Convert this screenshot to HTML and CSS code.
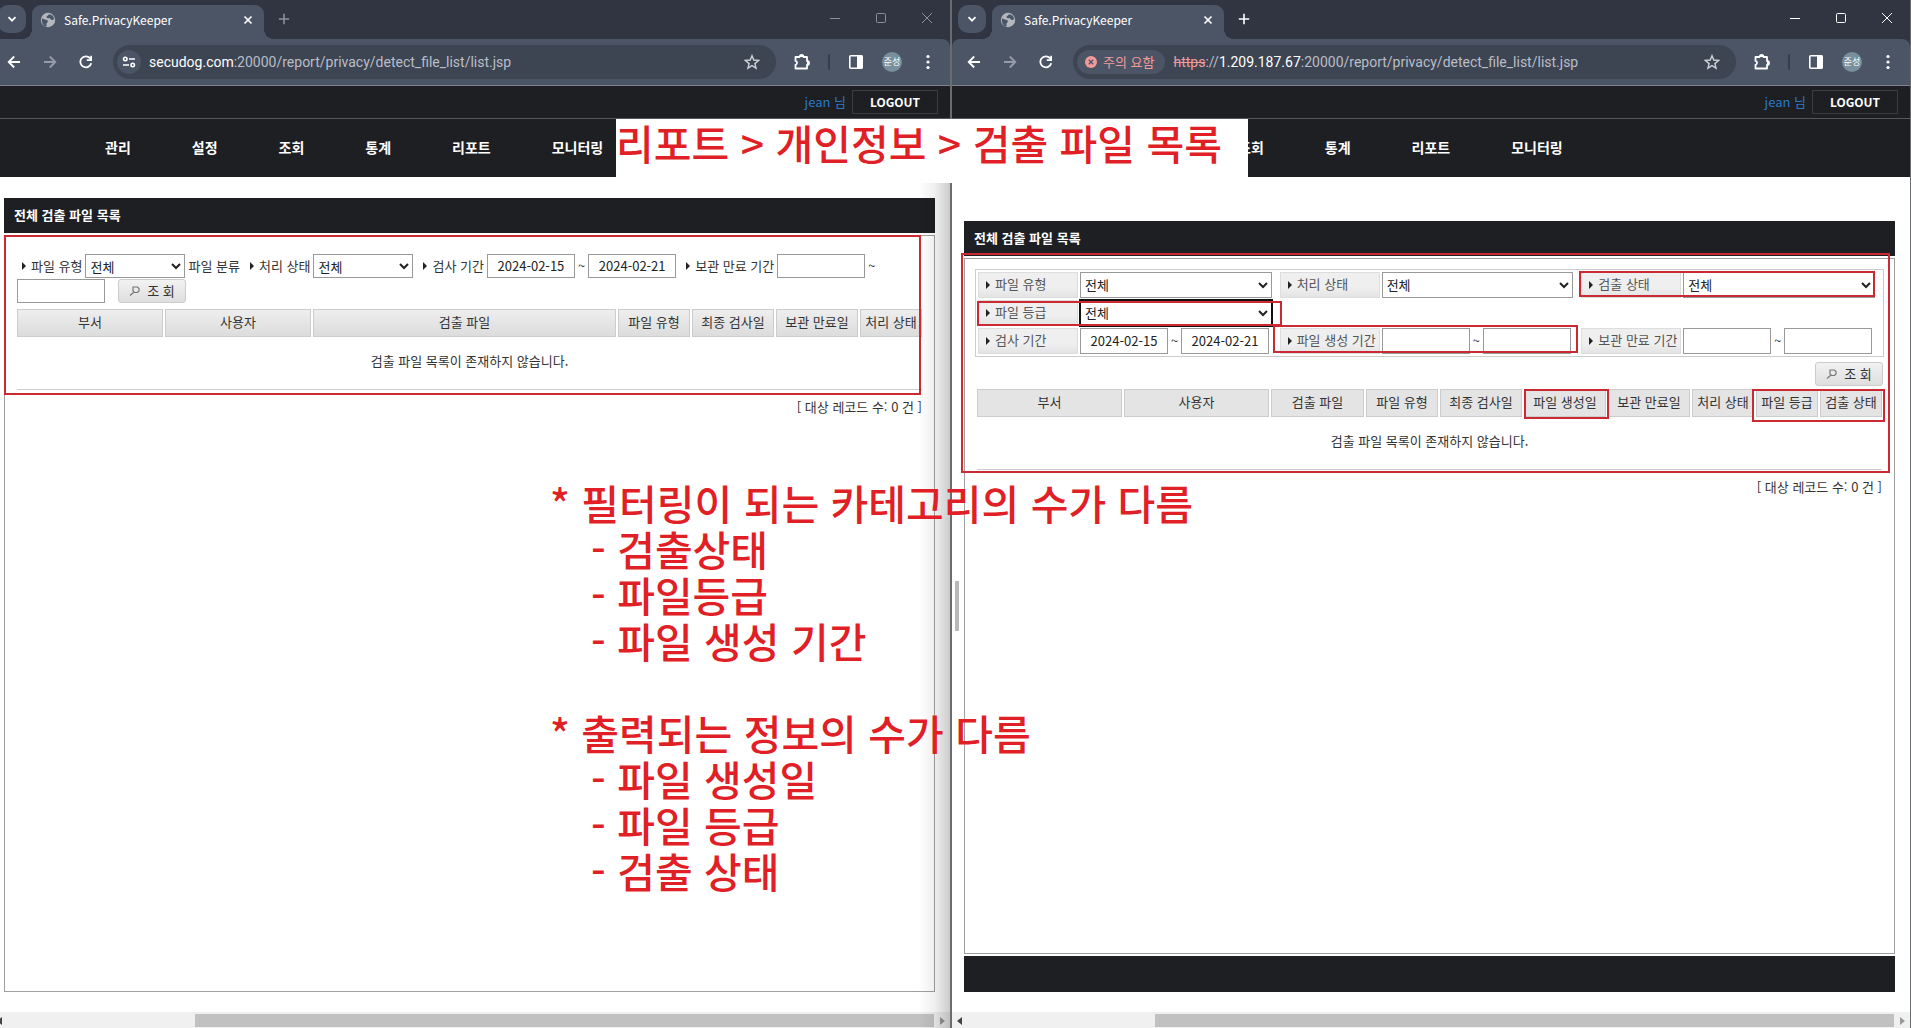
FILE: index.html
```html
<!DOCTYPE html>
<html lang="ko">
<head>
<meta charset="utf-8">
<title>Safe.PrivacyKeeper</title>
<link rel="stylesheet" href="styles.css">
</head>
<body>
<svg class="sprite" aria-hidden="true">
  <symbol id="i-chevron" viewBox="0 0 10 10"><path d="M1.5 3.2 5 6.7l3.500-3.500" fill="none" stroke="currentColor" stroke-width="1.800"/></symbol>
  <symbol id="i-globe" viewBox="0 0 16 16"><circle cx="8" cy="8" r="7.200" fill="#b4b8be"/><path d="M2 6.500c1.800.2 2.500 1.200 4 1.300 1.500.2 2 .8 1.800 2-.2 1-1.300 1-1.300 2.200v2.500C3.500 14 1.300 11 2 6.500zM9 2.200c-.5 1.500-2.500 1.300-2.500 3 .2 1.300 2 .8 3.200 1 1.200.3 1 1.800 2.300 1.900.9 0 1.300-.6 2-.8C14 4.500 12 2.300 9 2.200z" fill="#4b5565"/></symbol>
  <symbol id="i-close" viewBox="0 0 10 10"><path d="M1.500 1.500l7 7M8.500 1.500l-7 7" stroke="currentColor" stroke-width="1.700"/></symbol>
  <symbol id="i-plus" viewBox="0 0 12 12"><path d="M6 .8v10.400M.8 6h10.400" stroke="currentColor" stroke-width="1.600"/></symbol>
  <symbol id="i-min" viewBox="0 0 12 12"><path d="M1 6.500h10" stroke="currentColor"/></symbol>
  <symbol id="i-max" viewBox="0 0 12 12"><rect x="1.500" y="1.500" width="9" height="9" rx="1" fill="none" stroke="currentColor"/></symbol>
  <symbol id="i-x" viewBox="0 0 12 12"><path d="M1 1l10 10M11 1L1 11" stroke="currentColor"/></symbol>
  <symbol id="i-back" viewBox="0 0 14 14"><path d="M13 7H2M7.200 1.500L1.700 7l5.500 5.500" fill="none" stroke="currentColor" stroke-width="1.800"/></symbol>
  <symbol id="i-fwd" viewBox="0 0 14 14"><path d="M1 7h11M6.800 1.500L12.300 7l-5.500 5.500" fill="none" stroke="currentColor" stroke-width="1.800"/></symbol>
  <symbol id="i-reload" viewBox="0 0 14 14"><path d="M12.200 8.200A5.500 5.500 0 1 1 11 3.200l1.500 1.700" fill="none" stroke="currentColor" stroke-width="1.800"/><path d="M13 .8v5.200H7.800V4.300h3.500V.8z" fill="currentColor"/></symbol>
  <symbol id="i-tune" viewBox="0 0 14 14"><g fill="none" stroke="currentColor" stroke-width="1.600"><circle cx="3.300" cy="4" r="1.700"/><path d="M7 4h6M1 10h6"/><circle cx="10.700" cy="10" r="1.700"/></g></symbol>
  <symbol id="i-star" viewBox="0 0 16 16"><path d="M8 1.800l1.800 4.300 4.700.4-3.600 3.100 1.100 4.600L8 11.700l-4 2.500 1.100-4.600L1.500 6.500l4.700-.4z" fill="none" stroke="currentColor" stroke-width="1.500"/></symbol>
  <symbol id="i-puzzle" viewBox="0 0 18 18"><path d="M2.500 4H6.500a2 2 0 0 1 4 0H14v4a2 2 0 0 1 0 4v3.500H2.500v-3.700a2 2 0 0 0 0-3.900z" fill="none" stroke="currentColor" stroke-width="1.800" stroke-linejoin="round"/><path d="M6.700 4a1.800 1.800 0 0 1 3.600 0zM14 8.200a1.800 1.800 0 0 1 0 3.600z" fill="currentColor"/></symbol>
  <symbol id="i-panel" viewBox="0 0 16 16"><rect x="1.800" y="1.800" width="12.400" height="12.400" rx="1" fill="none" stroke="currentColor" stroke-width="1.600"/><path d="M9 1.500h5.500v13H9z" fill="currentColor"/></symbol>
  <symbol id="i-dots" viewBox="0 0 4 16"><g fill="currentColor"><circle cx="2" cy="2.500" r="1.600"/><circle cx="2" cy="8" r="1.600"/><circle cx="2" cy="13.500" r="1.600"/></g></symbol>
  <symbol id="i-warn" viewBox="0 0 12 12"><circle cx="6" cy="6" r="6" fill="#f29a9a"/><path d="M3.800 3.800l4.400 4.400M8.200 3.800L3.800 8.200" stroke="#4b5565" stroke-width="1.300"/></symbol>
  <symbol id="i-search" viewBox="0 0 12 12"><path d="M4.500 7.500l-3.500 3M4 2h4.500l1.500 1.500V6L8.500 7.500h-3L4 6z" fill="none" stroke="#777" stroke-width="1.200"/></symbol>
  <symbol id="i-left" viewBox="0 0 5 8"><path d="M5 0v8L0 4z" fill="currentColor"/></symbol>
  <symbol id="i-right" viewBox="0 0 5 8"><path d="M0 0v8l5-4z" fill="currentColor"/></symbol>
</svg>

<div class="desktop">
  <section class="pane pane-old">
    <div class="window inactive">
      <header class="tabstrip">
        <button class="tab-search" aria-label="탭 검색"><svg class="s10"><use href="#i-chevron"/></svg></button>
        <div class="tab">
          <svg class="s16"><use href="#i-globe"/></svg>
          <span class="tab-title">Safe.PrivacyKeeper</span>
          <button class="tab-close" aria-label="탭 닫기"><svg class="s10"><use href="#i-close"/></svg></button>
        </div>
        <button class="new-tab" aria-label="새 탭"><svg class="s12"><use href="#i-plus"/></svg></button>
        <div class="controls">
          <button aria-label="최소화"><svg class="s12"><use href="#i-min"/></svg></button>
          <button aria-label="최대화"><svg class="s12"><use href="#i-max"/></svg></button>
          <button aria-label="닫기"><svg class="s12"><use href="#i-x"/></svg></button>
        </div>
      </header>
      <div class="toolbar">
        <button class="tool" aria-label="뒤로"><svg class="s14"><use href="#i-back"/></svg></button>
        <button class="tool dim" aria-label="앞으로"><svg class="s14"><use href="#i-fwd"/></svg></button>
        <button class="tool" aria-label="새로고침"><svg class="s14"><use href="#i-reload"/></svg></button>
        <div class="omnibox">
          <button class="site-info" aria-label="사이트 정보"><svg class="s14"><use href="#i-tune"/></svg></button>
          <span class="url"><b>secudog.com</b>:20000/report/privacy/detect_file_list/list.jsp</span>
          <button class="star" aria-label="북마크"><svg class="s16"><use href="#i-star"/></svg></button>
        </div>
        <button class="tool" aria-label="확장 프로그램"><svg class="s18"><use href="#i-puzzle"/></svg></button>
        <span class="divider"></span>
        <button class="tool" aria-label="측면 패널"><svg class="s16"><use href="#i-panel"/></svg></button>
        <button class="tool" aria-label="프로필"><span class="avatar">준성</span></button>
        <button class="tool" aria-label="메뉴"><svg class="dots"><use href="#i-dots"/></svg></button>
      </div>
      <div class="userbar"><span class="user">jean 님</span><button class="logout">LOGOUT</button></div>
      <nav class="menu"><a href="#">관리</a><a href="#">설정</a><a href="#">조회</a><a href="#">통계</a><a href="#">리포트</a><a href="#">모니터링</a></nav>
      <main class="page">
        <h1 class="title">전체 검출 파일 목록</h1>
        <div class="panel">
          <form class="inline-filter">
            <label class="mark-label" for="a-type">파일 유형</label>
            <select id="a-type"><option>전체</option></select>
            <span>파일 분류</span>
            <label class="mark-label" for="a-state">처리 상태</label>
            <select id="a-state"><option>전체</option></select>
            <label class="mark-label" for="a-from">검사 기간</label>
            <input type="text" id="a-from" value="2024-02-15"><span>~</span><input type="text" aria-label="검사 기간 끝" value="2024-02-21">
            <label class="mark-label" for="a-exp">보관 만료 기간</label>
            <input type="text" id="a-exp"><span>~</span><input type="text" aria-label="보관 만료 기간 끝">
            <button type="button" class="search"><svg class="s12"><use href="#i-search"/></svg>조 회</button>
          </form>
          <table class="list glossy">
            <colgroup><col class="w146"><col class="w146"><col><col class="w72"><col class="w82"><col class="w82"><col class="w62"></colgroup>
            <thead><tr><th>부서</th><th>사용자</th><th>검출 파일</th><th>파일 유형</th><th>최종 검사일</th><th>보관 만료일</th><th>처리 상태</th></tr></thead>
            <tbody><tr><td colspan="7">검출 파일 목록이 존재하지 않습니다.</td></tr></tbody>
          </table>
          <p class="count">[ 대상 레코드 수: 0 건 ]</p>
        </div>
      </main>
      <div class="scrollbar"><svg class="arrow"><use href="#i-left"/></svg><span class="thumb"></span><svg class="arrow faint"><use href="#i-right"/></svg></div>
    </div>
    <div class="shade"></div>
    <div class="box box-old"></div>
  </section>

  <section class="pane pane-new">
    <div class="window">
      <header class="tabstrip">
        <button class="tab-search" aria-label="탭 검색"><svg class="s10"><use href="#i-chevron"/></svg></button>
        <div class="tab">
          <svg class="s16"><use href="#i-globe"/></svg>
          <span class="tab-title">Safe.PrivacyKeeper</span>
          <button class="tab-close" aria-label="탭 닫기"><svg class="s10"><use href="#i-close"/></svg></button>
        </div>
        <button class="new-tab" aria-label="새 탭"><svg class="s12"><use href="#i-plus"/></svg></button>
        <div class="controls">
          <button aria-label="최소화"><svg class="s12"><use href="#i-min"/></svg></button>
          <button aria-label="최대화"><svg class="s12"><use href="#i-max"/></svg></button>
          <button aria-label="닫기"><svg class="s12"><use href="#i-x"/></svg></button>
        </div>
      </header>
      <div class="toolbar">
        <button class="tool" aria-label="뒤로"><svg class="s14"><use href="#i-back"/></svg></button>
        <button class="tool dim" aria-label="앞으로"><svg class="s14"><use href="#i-fwd"/></svg></button>
        <button class="tool" aria-label="새로고침"><svg class="s14"><use href="#i-reload"/></svg></button>
        <div class="omnibox">
          <button class="site-info warning"><svg class="s12"><use href="#i-warn"/></svg>주의 요함</button>
          <span class="url"><s>https</s>://<b>1.209.187.67</b>:20000/report/privacy/detect_file_list/list.jsp</span>
          <button class="star" aria-label="북마크"><svg class="s16"><use href="#i-star"/></svg></button>
        </div>
        <button class="tool" aria-label="확장 프로그램"><svg class="s18"><use href="#i-puzzle"/></svg></button>
        <span class="divider"></span>
        <button class="tool" aria-label="측면 패널"><svg class="s16"><use href="#i-panel"/></svg></button>
        <button class="tool" aria-label="프로필"><span class="avatar">준성</span></button>
        <button class="tool" aria-label="메뉴"><svg class="dots"><use href="#i-dots"/></svg></button>
      </div>
      <div class="userbar"><span class="user">jean 님</span><button class="logout">LOGOUT</button></div>
      <nav class="menu menu-short"><a href="#">조회</a><a href="#">통계</a><a href="#">리포트</a><a href="#">모니터링</a></nav>
      <main class="page page-new">
        <h1 class="title">전체 검출 파일 목록</h1>
        <div class="panel">
          <form>
            <div class="grid-filter">
              <label class="mark-label" for="b-type">파일 유형</label>
              <div class="field"><select id="b-type"><option>전체</option></select></div>
              <label class="mark-label" for="b-state">처리 상태</label>
              <div class="field"><select id="b-state"><option>전체</option></select></div>
              <label class="mark-label" for="b-detect">검출 상태</label>
              <div class="field"><select id="b-detect"><option>전체</option></select></div>
              <label class="mark-label" for="b-grade">파일 등급</label>
              <div class="field wide"><select id="b-grade" class="focused"><option>전체</option></select></div>
              <label class="mark-label" for="b-from">검사 기간</label>
              <div class="field"><input type="text" id="b-from" value="2024-02-15"><span>~</span><input type="text" aria-label="검사 기간 끝" value="2024-02-21"></div>
              <label class="mark-label" for="b-made">파일 생성 기간</label>
              <div class="field"><input type="text" id="b-made"><span>~</span><input type="text" aria-label="파일 생성 기간 끝"></div>
              <label class="mark-label" for="b-exp">보관 만료 기간</label>
              <div class="field"><input type="text" id="b-exp"><span>~</span><input type="text" aria-label="보관 만료 기간 끝"></div>
            </div>
            <div class="actions"><button type="button" class="search"><svg class="s12"><use href="#i-search"/></svg>조 회</button></div>
          </form>
          <table class="list">
            <colgroup><col class="w145"><col class="w145"><col><col class="w72"><col class="w82"><col class="w82"><col class="w82"><col class="w62"><col class="w62"><col class="w62"></colgroup>
            <thead><tr><th>부서</th><th>사용자</th><th>검출 파일</th><th>파일 유형</th><th>최종 검사일</th><th>파일 생성일</th><th>보관 만료일</th><th>처리 상태</th><th>파일 등급</th><th>검출 상태</th></tr></thead>
            <tbody><tr><td colspan="10">검출 파일 목록이 존재하지 않습니다.</td></tr></tbody>
          </table>
          <p class="count">[ 대상 레코드 수: 0 건 ]</p>
        </div>
        <footer class="footer"></footer>
      </main>
      <div class="scrollbar"><svg class="arrow"><use href="#i-left"/></svg><span class="thumb"></span><svg class="arrow faint"><use href="#i-right"/></svg></div>
    </div>
    <span class="grip"></span>
    <div class="box box-new"></div>
    <div class="box box-detect"></div>
    <div class="box box-grade"></div>
    <div class="box box-made"></div>
    <div class="box box-made-col"></div>
    <div class="box box-last-cols"></div>
  </section>

  <p class="note path">리포트 &gt; 개인정보 &gt; 검출 파일 목록</p>
  <div class="note findings">
    <p>* 필터링이 되는 카테고리의 수가 다름</p>
    <ul><li>- 검출상태</li><li>- 파일등급</li><li>- 파일 생성 기간</li></ul>
    <p>* 출력되는 정보의 수가 다름</p>
    <ul><li>- 파일 생성일</li><li>- 파일 등급</li><li>- 검출 상태</li></ul>
  </div>
</div>
</body>
</html>
```
FILE: styles.css
```css
* { box-sizing: border-box; }

body {
  margin: 0;
  font: 13px/20px "Noto Sans CJK KR", "Noto Sans", sans-serif;
  color: #333;
  background: #fff;
}

button, input, select { font: inherit; color: inherit; }
button { padding: 0; border: 0; background: none; }
p, h1, ul { margin: 0; padding: 0; list-style: none; }
svg { display: block; flex: none; }

.sprite { position: absolute; width: 0; height: 0; }
.s10 { width: 10px; height: 10px; }
.s12 { width: 12px; height: 12px; }
.s14 { width: 14px; height: 14px; }
.s16 { width: 16px; height: 16px; }
.s18 { width: 18px; height: 18px; }
.dots { width: 4px; height: 16px; }

.desktop {
  position: relative;
  display: grid;
  grid-template-columns: 950fr 961fr;
  min-height: 100vh;
  overflow: hidden;
}

.pane { position: relative; display: flex; min-width: 0; overflow: hidden; }
.pane-old .window { margin-left: -8px; }
.pane-new { border-left: 2px solid #6a6c70; border-right: 1px solid #6a6c70; }

.window { flex: 1; min-width: 0; display: flex; flex-direction: column; }

/* browser frame */
.tabstrip {
  display: flex;
  height: 47px;
  margin-bottom: -8px;
  padding: 5px 0 8px 6px;
  background: #303541;
  color: #fff;
}

.tab-search {
  display: grid;
  place-items: center;
  width: 28px;
  height: 28px;
  border-radius: 10px;
  background: #4b5565;
}

.tab {
  position: relative;
  display: flex;
  align-items: center;
  width: 232px;
  margin-left: 6px;
  padding: 0 11px 5px 8px;
  border-radius: 9px 9px 0 0;
  background: #4b5565;
}

.tab::before, .tab::after {
  content: "";
  position: absolute;
  bottom: 0;
  width: 10px;
  height: 10px;
}
.tab::before { right: 100%; background: radial-gradient(circle at 0 0, transparent 10px, #4b5565 10px); }
.tab::after { left: 100%; background: radial-gradient(circle at 100% 0, transparent 10px, #4b5565 10px); }

.tab-title { flex: 1; padding-left: 8px; font-size: 12px; }
.new-tab { margin-left: 14px; height: 28px; }
.controls { display: flex; margin-left: auto; padding-right: 17px; gap: 34px; height: 26px; }
.inactive .new-tab, .inactive .controls { color: #8b909a; }

.toolbar {
  position: relative;
  display: flex;
  align-items: center;
  height: 47px;
  padding: 0 4px;
  border-bottom: 1px solid #7c818b;
  border-radius: 8px 8px 0 0;
  background: #4b5565;
  color: #fff;
}

.tool { display: grid; place-items: center; width: 36px; height: 36px; }
.dim { color: #979da8; }
.divider { width: 2px; height: 16px; margin: 0 8px; border-radius: 1px; background: #363c49; }

.omnibox {
  flex: 1;
  display: flex;
  align-items: center;
  min-width: 0;
  height: 34px;
  margin: 0 8px 0 9px;
  padding: 0 16px 0 4px;
  border-radius: 17px;
  background: #3d4452;
}

.site-info {
  display: grid;
  place-items: center;
  width: 24px;
  height: 24px;
  border-radius: 12px;
  background: #4b5565;
}
.warning {
  display: flex;
  align-items: center;
  gap: 6px;
  width: auto;
  padding: 0 11px 0 8px;
  color: #f29a9a;
}

.url {
  flex: 1;
  padding-left: 8px;
  font-family: Roboto, "Noto Sans", sans-serif;
  font-size: 14px;
  white-space: nowrap;
  color: #b9bec7;
}
.url b { font-weight: 400; color: #fff; }
.url s { color: #f29a9a; }
.star { color: #c8ccd3; }

.avatar {
  width: 20px;
  height: 20px;
  border-radius: 50%;
  background: #78909c;
  font-size: 9px;
  line-height: 20px;
  text-align: center;
}

/* site header */
.userbar {
  display: flex;
  justify-content: flex-end;
  align-items: center;
  gap: 6px;
  height: 33px;
  padding-right: 12px;
  border-bottom: 1px solid #55565a;
  background: #1e1f23;
}
.user { color: #2b78c8; }
.logout {
  width: 86px;
  height: 24px;
  border: 1px solid #3b3c40;
  font-size: 12px;
  font-weight: 700;
  color: #fff;
}

.menu {
  display: flex;
  align-items: center;
  gap: 61px;
  height: 58px;
  padding: 0 0 2px 113px;
  background: #1e1f23;
}
.menu-short { padding-left: 286px; }
.menu a { font-size: 14px; font-weight: 700; color: #fff; text-decoration: none; white-space: nowrap; }

/* page body */
.page {
  flex: 1;
  display: flex;
  flex-direction: column;
  gap: 2px;
  padding: 21px 15px 20px 12px;
}
.page-new { padding-top: 44px; }

.title {
  padding: 7px 10px 8px;
  background: #1e1f23;
  font-size: 13px;
  font-weight: 700;
  color: #fff;
}

.panel { flex: 1; padding: 10px; border: 1px solid #a0a0a0; }
.footer { height: 36px; background: #1e1f23; }

.mark-label { position: relative; padding-left: 14px; white-space: nowrap; }
.mark-label::before {
  content: "";
  position: absolute;
  left: 5px;
  top: 6px;
  border: 4px solid transparent;
  border-left: 4px solid #222;
  border-right: 0;
}

select, input {
  height: 24px;
  margin: 0;
  border: 1px solid #999;
  border-radius: 0;
  background: #fff;
  color: #222;
}
select { width: 100px; padding: 0; }
input { width: 88px; padding: 0 0 1px; text-align: center; }

.inline-filter {
  display: flex;
  flex-wrap: wrap;
  align-items: center;
  gap: 1px 3px;
  padding: 8px 2px 0;
}
.inline-filter select + .mark-label,
.inline-filter span + .mark-label,
.inline-filter input + .mark-label { margin-left: 2px; }
.inline-filter .search { margin-left: 10px; }

.search {
  display: flex;
  align-items: center;
  justify-content: center;
  gap: 6px;
  width: 68px;
  height: 24px;
  padding-bottom: 1px;
  border: 1px solid #ccc;
  border-radius: 3px;
  background: linear-gradient(#f2f2f2, #dedede);
}

.grid-filter {
  display: grid;
  grid-template-columns: repeat(3, 100px 1fr);
  grid-auto-rows: 26px;
  gap: 2px;
  padding: 2px;
  border: 1px solid #ccc;
}
.grid-filter .mark-label {
  padding: 1px 0 0 16px;
  border: 1px solid #ddd;
  background: linear-gradient(#efefef 60%, #e4e4e4);
  color: #555;
}
.grid-filter .mark-label::before { left: 7px; top: 8px; }
.field { display: flex; align-items: center; gap: 3px; }
.field span { width: 7px; }
.field select { width: calc(100% - 6px); height: 26px; padding-bottom: 1px; }
.field input { height: 26px; }
.wide { grid-column: 2 / -1; }
.field.wide select { width: 192px; }
.focused { outline: 2px solid #111; outline-offset: -1px; }

.actions { display: flex; justify-content: flex-end; padding: 5px 1px 1px 0; }

.list {
  width: 100%;
  table-layout: fixed;
  border-spacing: 2px;
}
.inline-filter + .list { margin-top: 4px; }
.list th {
  height: 28px;
  padding: 0 0 2px;
  border: 1px solid #ccc;
  background: #e4e4e4;
  font-weight: 400;
  white-space: nowrap;
}
.glossy th { background: linear-gradient(#eee, #dcdcdc); }
.list td {
  height: 51px;
  padding: 0 0 6px;
  border-bottom: 1px solid #ccc;
  text-align: center;
}
.w62 { width: 62px; }
.w72 { width: 72px; }
.w82 { width: 82px; }
.w145 { width: 145px; }
.w146 { width: 146px; }

.count { margin-top: 5px; padding-right: 2px; text-align: right; }

.scrollbar {
  display: flex;
  align-items: center;
  height: 16px;
  padding: 1px 5px 0;
  background: #f0f0f0;
}
.thumb { flex: 1; height: 13px; margin: 0 6px 0 193px; background: #c1c1c1; }
.arrow { width: 5px; height: 8px; color: #444; }
.faint { color: #999; }

/* overlays */
.shade {
  position: absolute;
  inset: 183px 0 0 auto;
  width: 32px;
  background: linear-gradient(to right, transparent, rgba(0, 0, 0, .06) 50%, rgba(0, 0, 0, .2));
}
.grip { position: absolute; left: 3px; top: 581px; width: 4px; height: 50px; background: #b8b8b8; }

.box { position: absolute; border: 2px solid #cc2a32; }
.box-old { left: 4px; right: 29px; top: 235px; height: 160px; }
.box-new { left: 9px; right: 20px; top: 253px; height: 220px; }
.box-detect { right: 35px; top: 271px; width: 296px; height: 26px; }
.box-grade { left: 25px; top: 301px; width: 305px; height: 25px; }
.box-made { left: 321px; top: 325px; width: 305px; height: 28px; }
.box-made-col { right: 301px; top: 389px; width: 85px; height: 30px; }
.box-last-cols { right: 25px; top: 389px; width: 133px; height: 33px; }

.note { position: absolute; font-size: 41px; line-height: 46px; font-weight: 500; color: #e01f26; white-space: nowrap; }
.path { left: 616px; top: 119px; width: 632px; height: 64px; background: #fff; }
.findings { left: 550px; top: 479px; }
.findings ul { padding: 0 0 0 41px; }
.findings ul + p { margin-top: 46px; }
```
